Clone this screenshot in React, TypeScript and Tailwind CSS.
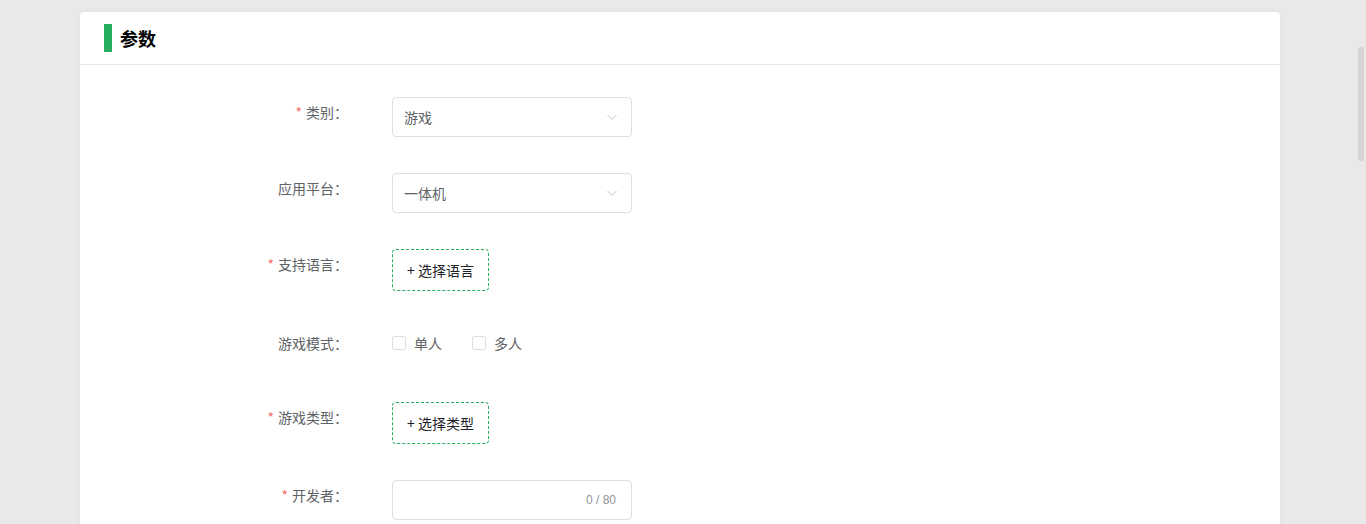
import React from "react";

const font = { fontFamily: '"Noto Sans CJK SC", "Noto Sans", sans-serif' };

function Label({ text, required }: { text: string; required?: boolean }) {
  return (
    <div className="w-[264px] shrink-0 pr-[44px] text-right text-[14px] leading-[30px] text-[#606266]">
      {required && <span className="mr-1 text-[#f56c6c]">*</span>}
      {text}：
    </div>
  );
}

function Chevron() {
  return (
    <svg width="12" height="12" viewBox="0 0 12 12" fill="none">
      <path d="M1.5 4l4.5 4.5L10.5 4" stroke="#c0c4cc" strokeWidth="1" />
    </svg>
  );
}

function Select({ value }: { value: string }) {
  return (
    <div className="flex h-[40px] w-[240px] items-center justify-between rounded border border-[#dcdfe6] bg-white pl-[11px] pr-[13px] text-[14px] text-[#606266]">
      <span>{value}</span>
      <Chevron />
    </div>
  );
}

function DashedButton({ text }: { text: string }) {
  return (
    <div className="flex h-[42px] w-[97px] items-center justify-center rounded border border-dashed border-[#27ae60] text-[14px] text-[#1f2329]">
      +&nbsp;{text}
    </div>
  );
}

function Check({ text }: { text: string }) {
  return (
    <label className="mr-[30px] flex items-center text-[14px] text-[#606266]">
      <span className="mr-[8px] inline-block h-[14px] w-[14px] rounded-[2px] border border-[#dcdfe6] bg-white" />
      {text}
    </label>
  );
}

export default function App() {
  return (
    <div className="relative h-[524px] w-full overflow-hidden bg-[#e9e9e9]" style={font}>
      <div className="ml-[80px] mt-[12px] w-[1200px] rounded-[4px] bg-white shadow-[0_0_6px_rgba(0,0,0,0.04)]">
        <div className="flex h-[53px] items-center border-b border-[#e4e7ed] pl-[24px]">
          <div className="mr-[8px] h-[28px] w-[8px] bg-[#27ae60]" />
          <h1 className="text-[18px] font-bold text-[#000]">参数</h1>
        </div>
        <div className="pb-[40px] pt-[32px] pl-[48px]">
          <div className="mb-[36px] flex items-start">
            <Label text="类别" required />
            <Select value="游戏" />
          </div>
          <div className="mb-[36px] flex items-start">
            <Label text="应用平台" />
            <Select value="一体机" />
          </div>
          <div className="mb-[36px] flex items-start">
            <Label text="支持语言" required />
            <DashedButton text="选择语言" />
          </div>
          <div className="mb-[43px] flex h-[32px] items-center">
            <Label text="游戏模式" />
            <div className="flex items-center">
              <Check text="单人" />
              <Check text="多人" />
            </div>
          </div>
          <div className="mb-[36px] flex items-start">
            <Label text="游戏类型" required />
            <DashedButton text="选择类型" />
          </div>
          <div className="flex items-start">
            <Label text="开发者" required />
            <div className="flex h-[40px] w-[240px] items-center justify-end rounded border border-[#dcdfe6] bg-white pr-[15px] font-['Liberation_Sans',sans-serif] text-[12px] text-[#909399]">
              0 / 80
            </div>
          </div>
        </div>
      </div>
      <div className="absolute right-[2px] top-[47px] h-[114px] w-[6px] rounded-full bg-[#d4d4d4]" />
    </div>
  );
}
